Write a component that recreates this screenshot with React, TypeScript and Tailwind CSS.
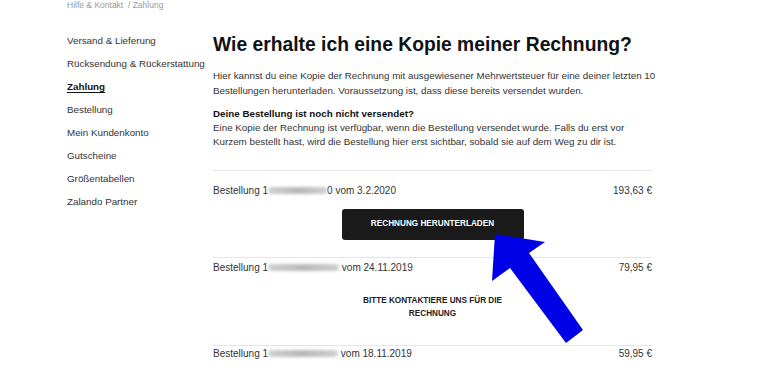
const sideLinks = [
  "Versand & Lieferung",
  "Rücksendung & Rückerstattung",
  "Zahlung",
  "Bestellung",
  "Mein Kundenkonto",
  "Gutscheine",
  "Größentabellen",
  "Zalando Partner",
];

function Blurred({ width }: { width: number }) {
  return (
    <span
      className="inline-block h-[7px] align-middle rounded-full bg-gradient-to-r from-[#d0d0d0] via-[#b8b8b8] to-[#cfcfcf] blur-[1.5px]"
      style={{ width }}
    />
  );
}

function OrderRow({
  first,
  last,
  width,
  date,
  price,
}: {
  first: string;
  last: string;
  width: number;
  date: string;
  price: string;
}) {
  return (
    <div className="flex items-center justify-between h-[14px] text-[10px] text-[#333]">
      <span>
        Bestellung {first}
        <Blurred width={width} />
        {last} vom {date}
      </span>
      <span>{price}</span>
    </div>
  );
}

export default function App() {
  return (
    <div className="relative w-[768px] h-[384px] overflow-hidden bg-white font-['Liberation_Sans',Arial,sans-serif] text-[#222]">
      <div className="pl-[67px]">
        <div className="pt-[1px] h-[10px] text-[8.5px] leading-[9px] text-[#9a9a9a]">
          Hilfe &amp; Kontakt&nbsp; / Zahlung
        </div>

        <div className="flex mt-[24px]">
          {/* sidebar */}
          <nav className="w-[146px] flex flex-col text-[9.8px] text-[#333] whitespace-nowrap">
            {sideLinks.map((l) => (
              <span
                key={l}
                className={
                  l === "Zahlung"
                    ? "h-[23px] leading-[14px] font-bold underline underline-offset-2 text-[#111]"
                    : "h-[23px] leading-[14px]"
                }
              >
                {l}
              </span>
            ))}
          </nav>

          {/* content */}
          <main className="w-[439px]">
            <h1 className="text-[19.3px] font-bold leading-[22px] text-[#111]">
              Wie erhalte ich eine Kopie meiner Rechnung?
            </h1>
            <p className="mt-[12px] text-[9.8px] leading-[15px] text-[#333] whitespace-nowrap">
              Hier kannst du eine Kopie der Rechnung mit ausgewiesener Mehrwertsteuer für eine deiner letzten 10
              <br />
              Bestellungen herunterladen. Voraussetzung ist, dass diese bereits versendet wurden.
            </p>
            <p className="mt-[9px] text-[9.8px] leading-[14px] text-[#333]">
              <span className="font-bold text-[#111]">Deine Bestellung ist noch nicht versendet?</span>
              <br />
              Eine Kopie der Rechnung ist verfügbar, wenn die Bestellung versendet wurde. Falls du erst vor
              Kurzem bestellt hast, wird die Bestellung hier erst sichtbar, sobald sie auf dem Weg zu dir ist.
            </p>

            <div className="mt-[21px] border-t border-[#e6e6e6] pt-[12px]">
              <OrderRow first="1" last="0" width={59} date="3.2.2020" price="193,63 €" />
              <div className="flex justify-center mt-[12px]">
                <button className="w-[182px] h-[31px] rounded-[3px] bg-[#1a1a1a] text-white text-[8.2px] font-bold">
                  RECHNUNG HERUNTERLADEN
                </button>
              </div>
            </div>

            <div className="mt-[17px] border-t border-[#e6e6e6] pt-[2px]">
              <OrderRow first="1" last="" width={71} date="24.11.2019" price="79,95 €" />
              <div className="mt-[20px] text-center text-[8.2px] leading-[13px] font-bold text-[#222]">
                BITTE KONTAKTIERE UNS FÜR DIE
                <br />
                RECHNUNG
              </div>
            </div>

            <div className="mt-[25px] border-t border-[#e6e6e6]">
              <OrderRow first="1" last="" width={70} date="18.11.2019" price="59,95 €" />
            </div>
          </main>
        </div>
      </div>

      {/* annotation arrow */}
      <svg className="absolute inset-0 pointer-events-none" width="768" height="384" viewBox="0 0 768 384">
        <polygon
          points="495,234 545,242 529,253 583,330 566,343 510,268 492,281"
          fill="#0000e6"
        />
      </svg>
    </div>
  );
}
